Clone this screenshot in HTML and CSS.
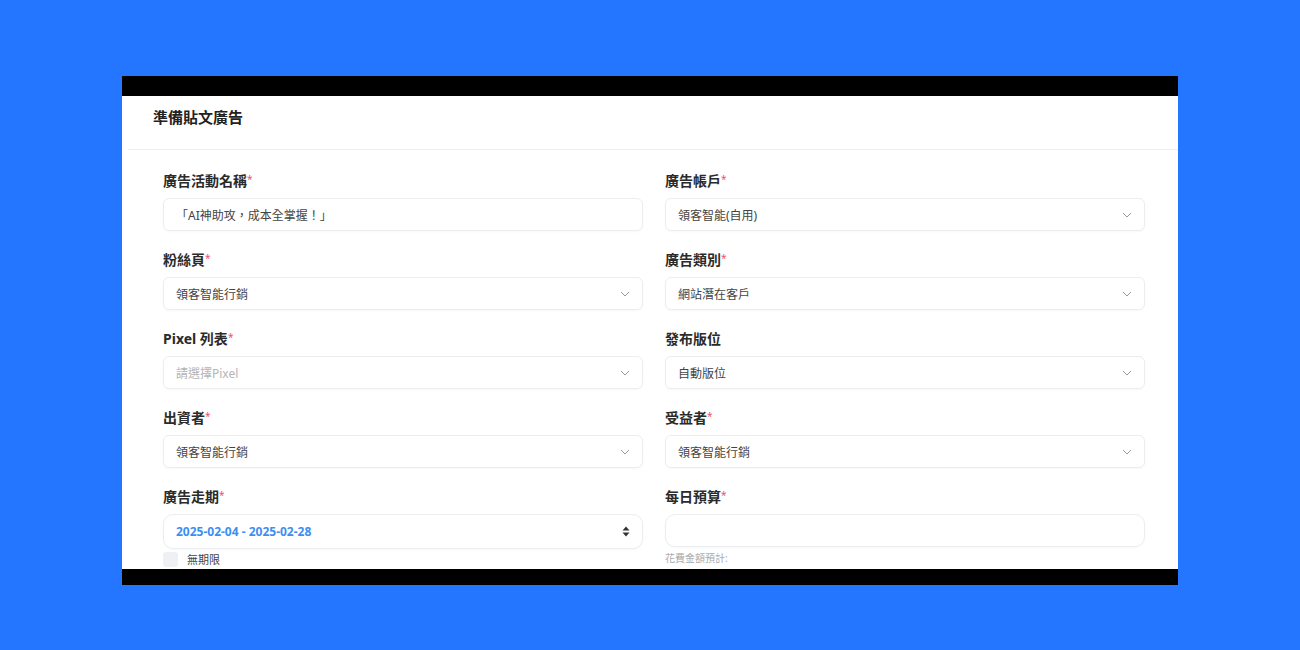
FILE: index.html
```html
<!DOCTYPE html>
<html lang="zh-Hant">
<head>
    <meta charset="UTF-8">
    <meta name="viewport" content="width=device-width, initial-scale=1.0">
    <title>準備貼文廣告</title>
    <link rel="stylesheet" href="styles.css">
</head>
<body>
    <div class="frame">
        <div class="frame-bar top"></div>
        <div class="panel">
            <div class="panel-head">準備貼文廣告</div>
            <div class="form-grid">
                <div class="field">
                    <div class="label">廣告活動名稱<span class="req">*</span></div>
                    <div class="input">「AI神助攻，成本全掌握！」</div>
                </div>
                <div class="field">
                    <div class="label">廣告帳戶<span class="req">*</span></div>
                    <div class="input select">領客智能(自用)
                        <svg class="chev" width="10" height="6" viewBox="0 0 10 6"><path d="M1 1l4 4 4-4" fill="none" stroke="#999" stroke-width="1"/></svg>
                    </div>
                </div>

                <div class="field">
                    <div class="label">粉絲頁<span class="req">*</span></div>
                    <div class="input select">領客智能行銷
                        <svg class="chev" width="10" height="6" viewBox="0 0 10 6"><path d="M1 1l4 4 4-4" fill="none" stroke="#999" stroke-width="1"/></svg>
                    </div>
                </div>
                <div class="field">
                    <div class="label">廣告類別<span class="req">*</span></div>
                    <div class="input select">網站潛在客戶
                        <svg class="chev" width="10" height="6" viewBox="0 0 10 6"><path d="M1 1l4 4 4-4" fill="none" stroke="#999" stroke-width="1"/></svg>
                    </div>
                </div>

                <div class="field">
                    <div class="label">Pixel 列表<span class="req">*</span></div>
                    <div class="input select placeholder">請選擇Pixel
                        <svg class="chev" width="10" height="6" viewBox="0 0 10 6"><path d="M1 1l4 4 4-4" fill="none" stroke="#999" stroke-width="1"/></svg>
                    </div>
                </div>
                <div class="field">
                    <div class="label">發布版位</div>
                    <div class="input select">自動版位
                        <svg class="chev" width="10" height="6" viewBox="0 0 10 6"><path d="M1 1l4 4 4-4" fill="none" stroke="#999" stroke-width="1"/></svg>
                    </div>
                </div>

                <div class="field">
                    <div class="label">出資者<span class="req">*</span></div>
                    <div class="input select">領客智能行銷
                        <svg class="chev" width="10" height="6" viewBox="0 0 10 6"><path d="M1 1l4 4 4-4" fill="none" stroke="#999" stroke-width="1"/></svg>
                    </div>
                </div>
                <div class="field">
                    <div class="label">受益者<span class="req">*</span></div>
                    <div class="input select">領客智能行銷
                        <svg class="chev" width="10" height="6" viewBox="0 0 10 6"><path d="M1 1l4 4 4-4" fill="none" stroke="#999" stroke-width="1"/></svg>
                    </div>
                </div>

                <div class="field">
                    <div class="label">廣告走期<span class="req">*</span></div>
                    <div class="input date">2025-02-04 - 2025-02-28
                        <svg class="spin" width="8" height="11" viewBox="0 0 8 11"><path d="M4 0.5L7.5 4.5H0.5Z M4 10.5L7.5 6.5H0.5Z" fill="#333"/></svg>
                    </div>
                    <div class="check-row"><span class="checkbox"></span>無期限</div>
                </div>
                <div class="field">
                    <div class="label">每日預算<span class="req">*</span></div>
                    <div class="input budget"></div>
                    <div class="hint">花費金額預計:</div>
                </div>
            </div>
        </div>
        <div class="frame-bar bottom"></div>
    </div>
</body>
</html>
```

FILE: styles.css
```css
body {
    margin: 0;
    height: 650px;
    background: #2475ff;
    font-family: "Noto Sans", "Noto Sans CJK TC", sans-serif;
    overflow: hidden;
}

.frame {
    width: 1056px;
    margin: 76px auto 0;
    display: flex;
    flex-direction: column;
    background: #ffffff;
}

.frame-bar {
    background: #000000;
}

.frame-bar.top {
    height: 20px;
}

.frame-bar.bottom {
    height: 16px;
}

.panel {
    height: 473px;
    margin-left: 6px;
    overflow: hidden;
    background: #ffffff;
}

.panel-head {
    height: 54px;
    padding: 10px 0 0 25px;
    box-sizing: border-box;
    border-bottom: 1px solid #ebedf0;
    font-size: 15px;
    line-height: 22px;
    font-weight: bold;
    color: #222;
}

.form-grid {
    display: grid;
    grid-template-columns: 480px 480px;
    column-gap: 22px;
    row-gap: 19px;
    padding: 21px 0 0 35px;
}

.label {
    font-size: 14px;
    line-height: 20px;
    font-weight: bold;
    color: #2b2b2b;
    margin-bottom: 7px;
}

.req {
    color: #f0506e;
    font-size: 10px;
    font-weight: normal;
    vertical-align: top;
    line-height: 16px;
}

.input {
    height: 33px;
    box-sizing: border-box;
    border: 1px solid #ebedf0;
    border-radius: 6px;
    padding: 0 12px;
    display: flex;
    align-items: center;
    font-size: 12px;
    color: #444;
    box-shadow: 0 1px 2px rgba(0, 0, 0, 0.03);
}

.select {
    justify-content: space-between;
}

.placeholder {
    color: #b5b5b5;
}

.date {
    height: 35px;
    border-radius: 10px;
    justify-content: space-between;
    color: #3d8ef0;
    font-weight: bold;
}

.budget {
    height: 33px;
    border-radius: 10px;
}

.check-row {
    display: flex;
    align-items: center;
    gap: 9px;
    margin-top: 3px;
    font-size: 11px;
    line-height: 15px;
    color: #444;
}

.checkbox {
    width: 15px;
    height: 15px;
    border-radius: 3px;
    background: #eef0f4;
}

.hint {
    margin-top: 3px;
    font-size: 10px;
    color: #aaa;
}
```
